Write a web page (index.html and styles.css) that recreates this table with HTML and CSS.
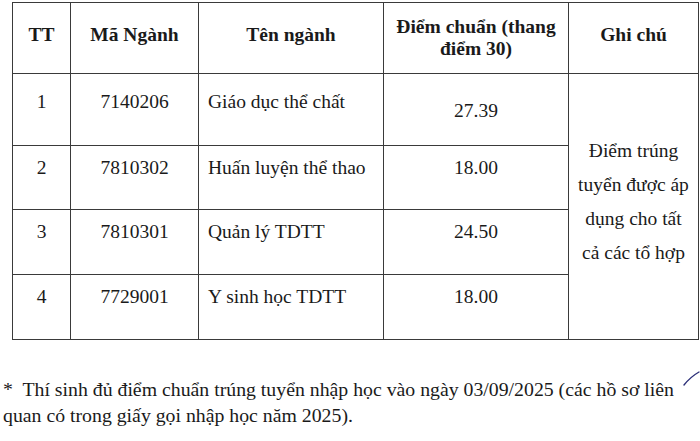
FILE: index.html
```html
<!DOCTYPE html>
<html lang="vi">
<head>
<meta charset="utf-8">
<title>Điểm chuẩn</title>
<link rel="stylesheet" href="styles.css">
</head>
<body>
<div class="page">
  <table class="scores">
    <colgroup>
      <col class="c-tt">
      <col class="c-ma">
      <col class="c-ten">
      <col class="c-diem">
      <col class="c-ghi">
    </colgroup>
    <thead>
      <tr class="r-head">
        <th>TT</th>
        <th>Mã Ngành</th>
        <th>Tên ngành</th>
        <th class="two-line">Điểm chuẩn (thang điểm 30)</th>
        <th>Ghi chú</th>
      </tr>
    </thead>
    <tbody>
      <tr class="r1">
        <td class="center">1</td>
        <td class="center">7140206</td>
        <td class="name">Giáo dục thể chất</td>
        <td class="center score-mid">27.39</td>
        <td class="note" rowspan="4"><div class="note-text">Điểm trúng tuyển được áp dụng cho tất cả các tổ hợp</div></td>
      </tr>
      <tr class="r2">
        <td class="center">2</td>
        <td class="center">7810302</td>
        <td class="name">Huấn luyện thể thao</td>
        <td class="center">18.00</td>
      </tr>
      <tr class="r3">
        <td class="center">3</td>
        <td class="center">7810301</td>
        <td class="name">Quản lý TDTT</td>
        <td class="center">24.50</td>
      </tr>
      <tr class="r4">
        <td class="center">4</td>
        <td class="center">7729001</td>
        <td class="name">Y sinh học TDTT</td>
        <td class="center">18.00</td>
      </tr>
    </tbody>
  </table>
  <p class="footnote">*&nbsp; Thí sinh đủ điểm chuẩn trúng tuyển nhập học vào ngày 03/09/2025 (các hồ sơ liên quan có trong giấy gọi nhập học năm 2025).</p>
  <svg class="pen" width="20" height="18" viewBox="0 0 20 18" aria-hidden="true">
    <path d="M1 15 C5 10 9 6 16 2" fill="none" stroke="#2b2f78" stroke-width="1.4" stroke-linecap="round"/>
  </svg>
</div>
</body>
</html>
```
FILE: styles.css
```css
html, body {
  margin: 0;
  padding: 0;
  background: #ffffff;
}

.page {
  position: relative;
  width: 700px;
  height: 441px;
  overflow: hidden;
  font-family: "Liberation Serif", "Times New Roman", serif;
  color: #1a1a1a;
}

.scores {
  margin: 2px 0 0 12px;
  border-collapse: collapse;
  table-layout: fixed;
  width: 686px;
  font-size: 19.5px;
}

.c-tt { width: 58px; }
.c-ma { width: 128px; }
.c-ten { width: 185px; }
.c-diem { width: 185px; }
.c-ghi { width: 130px; }

.scores th,
.scores td {
  border: 1.6px solid #3a3a3a;
  padding: 0;
  line-height: 22px;
}

.scores th {
  font-weight: bold;
  text-align: center;
  vertical-align: middle;
  padding-bottom: 6px;
}

.scores th.two-line {
  padding: 0 8px 0 8px;
}

.r-head { height: 71px; }
.r1 { height: 72px; }
.r2 { height: 64px; }
.r3 { height: 65px; }
.r4 { height: 65px; }

.scores td {
  vertical-align: top;
  padding-top: 11px;
}

.r1 td { padding-top: 17px; }
.r1 td.score-mid { padding-top: 26px; }

.center { text-align: center; }

.name {
  text-align: left;
  padding-left: 9px !important;
}

.scores td.note {
  vertical-align: middle;
  text-align: center;
  padding: 0 0 10px 0;
}

.note-text {
  line-height: 34px;
  padding: 0 6px;
}

.footnote {
  margin: 36px 0 0 3px;
  font-size: 19.8px;
  line-height: 26px;
  width: 692px;
}

.pen {
  position: absolute;
  left: 683px;
  top: 370px;
}
```
